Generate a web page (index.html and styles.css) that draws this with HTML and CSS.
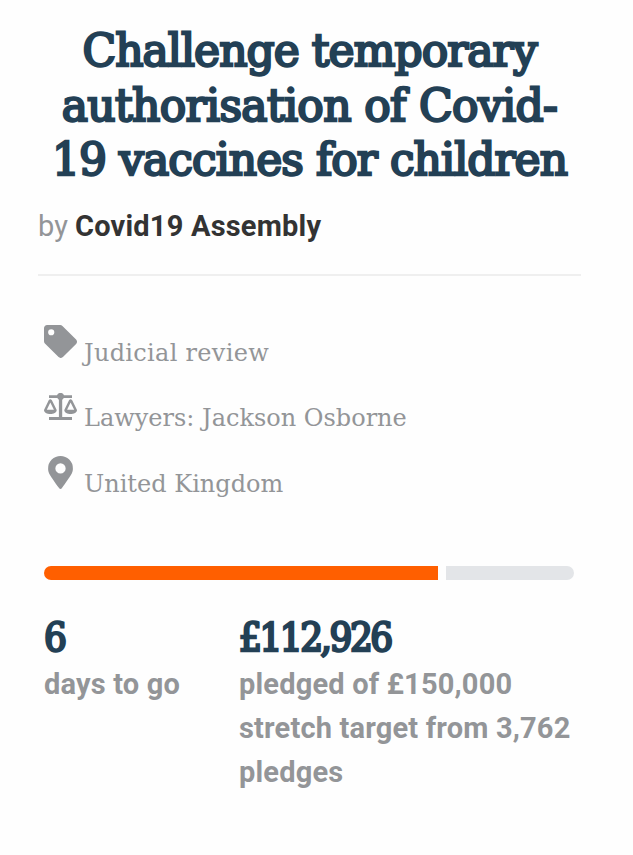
FILE: index.html
```html
<!DOCTYPE html>
<html lang="en">
<head>
<meta charset="utf-8">
<title>Challenge temporary authorisation of Covid-19 vaccines for children</title>
<link rel="stylesheet" href="styles.css">
</head>
<body>
<main class="case">
  <h1 class="title"><span class="line-one">Challenge temporary</span><br><span class="line-two">authorisation of Covid-</span><br><span class="line-three">19 vaccines for children</span></h1>
  <p class="author">by <strong>Covid19 Assembly</strong></p>
  <ul class="meta">
    <li>
      <svg class="icon" viewBox="0 0 512 512"><path d="M0 252V48C0 21 21 0 48 0h204c13 0 25 5 34 14l212 212c19 19 19 49 0 68L294 498c-19 19-49 19-68 0L14 286c-9-9-14-21-14-34zM112 64a48 48 0 1 0 0 96 48 48 0 0 0 0-96z"/></svg>
      <span class="category">Judicial review</span>
    </li>
    <li>
      <svg class="icon scales" viewBox="0 0 33 28"><path d="M5 2.200h8A3.800 3.800 0 0 1 20 2.200h8v2.800h-8.300a4 4 0 0 1-1.500 1.700V24.100h9.800V27H5v-2.900h9.900V6.700a4 4 0 0 1-1.500-1.700H5z"/><path fill-rule="evenodd" d="M0 17 4.700 7.200Q6.300 5.200 7.900 7.200L12.700 17C12.700 22.300 0 22.300 0 17zM2.800 16.800h7.100L6.300 9.500zM20.300 17l4.700-9.800q1.600-2 3.200 0L33 17c0 5.300-12.700 5.300-12.700 0zM23.100 16.800h7.100L26.600 9.500z"/></svg>
      <span>Lawyers: Jackson Osborne</span>
    </li>
    <li>
      <svg class="icon" viewBox="-64 0 512 512"><path d="M172 502C27 291 0 269 0 192a192 192 0 0 1 384 0c0 77-27 99-172 310-10 13-30 13-40 0zM192 112a80 80 0 1 0 0 160 80 80 0 0 0 0-160z"/></svg>
      <span>United Kingdom</span>
    </li>
  </ul>
  <div class="progress"><div class="raised"></div><div class="remaining"></div></div>
  <div class="stats">
    <div class="stat"><div class="number">6</div><p>days to go</p></div>
    <div class="stat"><div class="number amount">£112,926</div><p>pledged of £150,000<br>stretch target from 3,762<br>pledges</p></div>
  </div>
</main>
</body>
</html>
```
FILE: styles.css
```css
* { box-sizing: border-box; }
body {
  margin: 0;
  background: #fefefe;
  color: #939598;
  font-family: Roboto, sans-serif;
}
.case { padding: 24px 52px 0 38px; }
.title {
  margin: 0;
  color: #234055;
  font: 400 44px/54.5px "Roboto Slab", "DejaVu Serif", serif;
  -webkit-text-stroke: 2.4px #234055;
  text-align: center;
  white-space: nowrap;
}
.line-one { letter-spacing: -.95px; }
.line-two { letter-spacing: -.65px; }
.line-three { letter-spacing: -.95px; }
.author {
  margin: 0;
  padding: 16px 0 26px;
  border-bottom: 2px solid #efefef;
  font-size: 29px;
  line-height: 44px;
}
.author strong { color: #333; font-weight: 700; letter-spacing: .2px; }
.meta {
  list-style: none;
  margin: 0;
  padding: 44px 6px 0;
  font: 24px/40px "Roboto Slab", "DejaVu Serif", serif;
}
.meta li { display: flex; gap: 7px; height: 65.5px; }
.meta span { padding-top: 13px; white-space: nowrap; }
.meta .category { letter-spacing: .3px; }
.icon { width: 33px; height: 33px; margin-top: 5px; fill: #939598; flex: none; }
.scales { height: 28px; margin-top: 8px; }
.progress { display: flex; gap: 8px; height: 14px; margin: 50px 7px 0 6px; }
.raised { width: 394px; background: #ff5f00; border-radius: 7px 0 0 7px; }
.remaining { width: 128px; background: #e3e5e8; border-radius: 0 7px 7px 0; }
.stats { display: grid; grid-template-columns: 195px 1fr; padding: 30px 0 0 6px; white-space: nowrap; }
.stats p { margin: 0; font-size: 29px; line-height: 44px; font-weight: 700; letter-spacing: .18px; }
.number {
  color: #234055;
  font: 400 40px/54px "Roboto Slab", "DejaVu Serif Condensed", "DejaVu Serif", serif;
  -webkit-text-stroke: 2.4px #234055;
  margin-bottom: -2px;
}
.amount { letter-spacing: -2.5px; }
```
